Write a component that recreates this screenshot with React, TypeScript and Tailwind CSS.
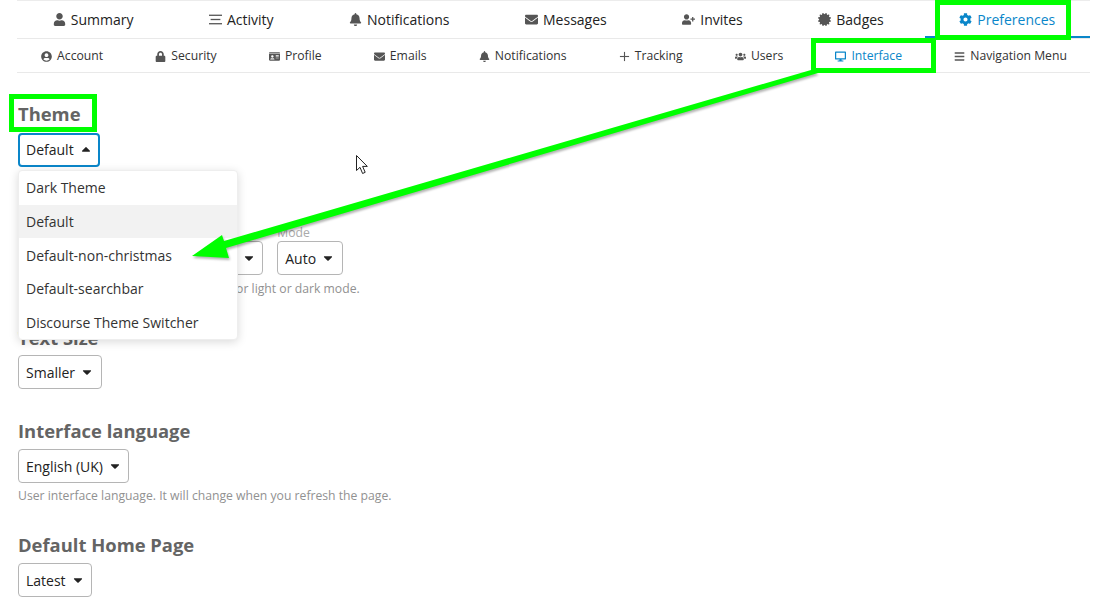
import React from "react";
import {
	FaUser,
	FaBell,
	FaEnvelope,
	FaUserPlus,
	FaCertificate,
	FaCog,
	FaUserCircle,
	FaLock,
	FaIdCard,
	FaUsers,
	FaDesktop,
	FaBars,
	FaCaretDown,
	FaCaretUp,
} from "react-icons/fa";

const ThinStream = ({ className }: { className?: string }) => (
	<svg className={className} width="1em" height="1em" viewBox="0 0 12 12" fill="currentColor">
		<rect x="0" y="1.5" width="12" height="1.2" />
		<rect x="1.5" y="5.4" width="9" height="1.2" />
		<rect x="0" y="9.3" width="12" height="1.2" />
	</svg>
);

const ThinPlus = ({ className }: { className?: string }) => (
	<svg className={className} width="1em" height="1em" viewBox="0 0 12 12" fill="currentColor">
		<rect x="1" y="5.4" width="10" height="1.2" />
		<rect x="5.4" y="1" width="1.2" height="10" />
	</svg>
);

const mainTabs = [
	{ label: "Summary", icon: FaUser },
	{ label: "Activity", icon: ThinStream },
	{ label: "Notifications", icon: FaBell },
	{ label: "Messages", icon: FaEnvelope },
	{ label: "Invites", icon: FaUserPlus },
	{ label: "Badges", icon: FaCertificate },
	{ label: "Preferences", icon: FaCog, active: true },
];

const subTabs = [
	{ label: "Account", icon: FaUserCircle },
	{ label: "Security", icon: FaLock },
	{ label: "Profile", icon: FaIdCard },
	{ label: "Emails", icon: FaEnvelope },
	{ label: "Notifications", icon: FaBell },
	{ label: "Tracking", icon: ThinPlus },
	{ label: "Users", icon: FaUsers },
	{ label: "Interface", icon: FaDesktop, active: true },
	{ label: "Navigation Menu", icon: FaBars },
];

const themes = [
	"Dark Theme",
	"Default",
	"Default-non-christmas",
	"Default-searchbar",
	"Discourse Theme Switcher",
];

const Select = ({ label, open }: { label: string; open?: boolean }) => (
	<div
		className={`inline-flex h-[34px] items-center gap-[5px] rounded-[4px] bg-white text-[14px] text-[#222222] ${
			open
				? "border-2 border-[#0a86c9] pb-[2px] pl-[6px] pr-[5px]"
				: "border border-[#b5b5b5] pl-[7px] pr-[6.5px]"
		}`}
	>
		<span>{label}</span>
		{open ? <FaCaretUp className="text-[14px]" /> : <FaCaretDown className="text-[14px]" />}
	</div>
);

const Heading = ({ children }: { children: React.ReactNode }) => (
	<h3 className="h-[24px] text-[18.4px] font-bold leading-[24px] text-[#646464]">{children}</h3>
);

export default function App() {
	return (
		<div className="relative h-[611px] w-[1116px] overflow-hidden bg-white font-['Open_Sans',sans-serif]">
			<div className="mx-[17px] w-[1073px]">
				<div className="h-px bg-[#ececec]" />
				<nav className="flex h-[38px] gap-[6px] border-b border-[#e9e9e9] pl-px">
					{mainTabs.map((tab) => (
						<div
							key={tab.label}
							className={`flex flex-auto items-center justify-center gap-[5px] text-[14px] ${
								tab.active ? "border-b-2 border-[#0a86c9] pt-[2px] text-[#0a86c9]" : "text-[#222222]"
							}`}
						>
							<tab.icon className={`text-[13px] ${tab.active ? "" : "text-[#555555]"}`} />
							<span>{tab.label}</span>
						</div>
					))}
				</nav>
				<div className="h-[34px] border-b border-[#e9e9e9]">
					<nav className="-ml-[2px] flex h-full w-[1078px]">
						{subTabs.map((tab) => (
							<div
								key={tab.label}
								className={`flex flex-auto items-center justify-center gap-[5px] pt-[2px] text-[12.2px] ${
									tab.active ? "text-[#0a86c9]" : "text-[#333333]"
								}`}
							>
								<tab.icon className={`text-[11px] ${tab.active ? "" : "text-[#555555]"}`} />
								<span>{tab.label}</span>
							</div>
						))}
					</nav>
				</div>

				<div className="pl-px">
					<section className="pt-[29px]">
						<Heading>Theme</Heading>
						<div className="mt-[7px]">
							<Select label="Default" open />
						</div>
					</section>

					<section className="pt-[58px]">
						<div className="flex items-end gap-[14px] pl-[161px]">
							<Select label="Regular" />
							<div>
								<div className="h-[16px] text-[12.2px] leading-[16px] text-[#aaaaaa]">Mode</div>
								<Select label="Auto" />
							</div>
						</div>
						<p className="mt-[5px] h-[18px] pl-[214px] text-[12.2px] leading-[18px] text-[#919191]">
							for light or dark mode.
						</p>
					</section>

					<section className="pt-[28px]">
						<Heading>Text Size</Heading>
						<div className="mt-[5px]">
							<Select label="Smaller" />
						</div>
					</section>

					<section className="pt-[30px]">
						<Heading>Interface language</Heading>
						<div className="mt-[6px]">
							<Select label="English (UK)" />
						</div>
						<p className="mt-[4px] h-[18px] text-[12.2px] leading-[18px] text-[#919191]">
							User interface language. It will change when you refresh the page.
						</p>
					</section>

					<section className="pt-[28px]">
						<Heading>Default Home Page</Heading>
						<div className="mt-[6px]">
							<Select label="Latest" />
						</div>
					</section>
				</div>
			</div>

			{/* open theme dropdown */}
			<ul className="absolute left-[18px] top-[170px] w-[220px] overflow-hidden rounded-[4px] border border-[#eeeeee] bg-white text-[14px] text-[#333333] shadow-[0_2px_10px_rgba(0,0,0,0.15)]">
				{themes.map((name) => (
					<li
						key={name}
						className={`flex h-[33.7px] items-center pl-[7px] ${name === "Default" ? "bg-[#f2f2f2]" : ""}`}
					>
						{name}
					</li>
				))}
			</ul>

			{/* screenshot annotations */}
			<div className="absolute left-[935px] top-0 h-[40px] w-[136px] border-[5px] border-[#00ff00]" />
			<div className="absolute left-[811px] top-[38px] h-[35px] w-[125px] border-[5px] border-[#00ff00]" />
			<div className="absolute left-[9px] top-[94px] h-[38px] w-[88px] border-[5px] border-[#00ff00]" />
			<svg className="absolute left-0 top-0 drop-shadow-[1px_2px_1px_rgba(0,0,0,0.3)]" width="1116" height="611">
				<polygon points="811,70 818,73 226,248 229,258 192,256 222,235 224,241" fill="#00ff00" />
			</svg>
			<svg className="absolute left-[355px] top-[154px]" width="15" height="21" viewBox="0 0 15 21">
				<path
					d="M1.5 1.5V16.5L5 13.3L7.6 19.5L10.2 18.3L7.6 12.4H12.3Z"
					fill="#ffffff"
					stroke="#222222"
					strokeWidth="1"
				/>
			</svg>
		</div>
	);
}
